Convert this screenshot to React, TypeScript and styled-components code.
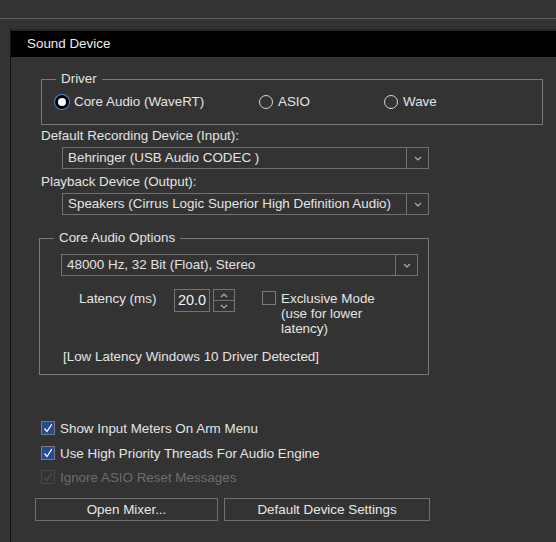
import * as React from 'react';
import styled, { createGlobalStyle } from 'styled-components';

const GlobalStyle = createGlobalStyle`
  html, body {
    margin: 0;
    padding: 0;
    background-color: #333333;
  }
  body {
    font-family: "Liberation Sans", Arial, Helvetica, sans-serif;
    font-size: 13.4px;
    color: #e4e4e4;
    overflow: hidden;
  }
`;

const Page = styled.div`
  width: 556px;
  height: 542px;
  overflow: hidden;
`;

const TopStrip = styled.div`
  height: 18px;
  border-bottom: 1px solid #5f5f5f;
  margin-bottom: 10px;
`;

const Panel = styled.div`
  margin-left: 10px;
  border-left: 1px solid #121212;
  border-top: 2px solid #262626;
  height: 600px;
`;

const PanelHeader = styled.div`
  height: 26px;
  line-height: 26px;
  background-color: #000;
  padding-left: 16px;
  color: #ececec;
`;

const PanelBody = styled.div`
  display: flex;
  flex-direction: column;
  align-items: flex-start;
`;

const Group = styled.fieldset<{ $left: number; $width: number; $top: number }>`
  margin: ${p => p.$top}px 0 0 ${p => p.$left}px;
  width: ${p => p.$width}px;
  box-sizing: border-box;
  border: 1px solid #7a7a7a;
  padding: 0;
  min-width: 0;
`;

const GroupTitle = styled.legend`
  margin-left: 14px;
  padding: 0 5px;
  line-height: 16px;
  color: #e4e4e4;
`;

const RadioRow = styled.div`
  display: grid;
  grid-template-columns: 204px 125px auto;
  padding: 7px 0 14px 13px;
`;

const RadioLabel = styled.label`
  display: flex;
  align-items: center;
  gap: 5px;
  line-height: 16px;
`;

const RadioDot = styled.span<{ $on?: boolean }>`
  width: 14px;
  height: 14px;
  box-sizing: border-box;
  border-radius: 50%;
  border: ${p => (p.$on ? '3px solid #000' : '1px solid #d6d6d6')};
  background-color: ${p => (p.$on ? '#ffffff' : 'transparent')};
  box-shadow: ${p => (p.$on ? '0 0 0 1px #4a8ad8' : 'none')};
`;

const FieldLabel = styled.div<{ $top: number; $left: number }>`
  margin: ${p => p.$top}px 0 0 ${p => p.$left}px;
  line-height: 16px;
`;

const Select = styled.div<{ $top: number; $left: number; $width: number }>`
  margin: ${p => p.$top}px 0 0 ${p => p.$left}px;
  width: ${p => p.$width}px;
  height: 22px;
  box-sizing: border-box;
  border: 1px solid #727272;
  display: flex;
  align-items: stretch;
`;

const SelectText = styled.div`
  flex: 1;
  padding-left: 5px;
  line-height: 20px;
  white-space: nowrap;
  overflow: hidden;
`;

const SelectArrow = styled.div`
  width: 21px;
  border-left: 1px solid #727272;
  display: flex;
  align-items: center;
  justify-content: center;
`;

const LatencyRow = styled.div`
  display: flex;
  align-items: flex-start;
  margin: 13px 0 0 39px;
`;

const LatencyLabel = styled.div`
  line-height: 16px;
  margin-top: 2px;
  width: 95px;
`;

const SpinText = styled.div`
  width: 36px;
  height: 23px;
  box-sizing: border-box;
  border: 1px solid #747474;
  line-height: 21px;
  font-size: 14.5px;
  text-align: center;
  color: #f0f0f0;
`;

const SpinButtons = styled.div`
  margin-left: 3px;
  width: 22px;
  height: 23px;
  box-sizing: border-box;
  border: 1px solid #747474;
  display: flex;
  flex-direction: column;
`;

const SpinHalf = styled.div<{ $top?: boolean }>`
  flex: 1;
  display: flex;
  align-items: center;
  justify-content: center;
  border-bottom: ${p => (p.$top ? '1px solid #747474' : 'none')};
`;

const ExclusiveOption = styled.div`
  display: flex;
  align-items: flex-start;
  margin-left: 27px;
  margin-top: 2px;
`;

const ExclusiveText = styled.div`
  margin-left: 5px;
  line-height: 15px;
`;

const Note = styled.div`
  margin: 13px 0 9px 23px;
  line-height: 16px;
`;

const CheckRow = styled.label<{ $top: number; $disabled?: boolean }>`
  display: flex;
  align-items: center;
  gap: 5px;
  margin: ${p => p.$top}px 0 0 30px;
  height: 18px;
  color: ${p => (p.$disabled ? '#6e6e6e' : '#e4e4e4')};
`;

const Box = styled.span<{ $checked?: boolean; $disabled?: boolean }>`
  width: 14px;
  height: 14px;
  box-sizing: border-box;
  border: 1px solid ${p => (p.$disabled ? '#474747' : '#7c7c7c')};
  background-color: ${p => (p.$checked && !p.$disabled ? '#234a94' : 'transparent')};
  display: flex;
  align-items: center;
  justify-content: center;
`;

const ButtonRow = styled.div`
  display: flex;
  gap: 6px;
  margin: 12px 0 0 24px;
`;

const Button = styled.button<{ $width: number }>`
  width: ${p => p.$width}px;
  height: 23px;
  box-sizing: border-box;
  border: 1px solid #707070;
  background-color: #333333;
  color: #e8e8e8;
  font-family: "Liberation Sans", Arial, sans-serif;
  font-size: 13.4px;
  padding: 0;
`;

const ChevronDown = () => (
  <svg width="8" height="5" viewBox="0 0 8 5">
    <path d="M1 1 L4 4 L7 1" stroke="#b0b0b0" strokeWidth="1.2" fill="none" />
  </svg>
);

const ChevronUp = () => (
  <svg width="8" height="5" viewBox="0 0 8 5">
    <path d="M1 4 L4 1 L7 4" stroke="#b0b0b0" strokeWidth="1.2" fill="none" />
  </svg>
);

const Tick = (props: { color: string }) => (
  <svg width="10" height="10" viewBox="0 0 10 10">
    <path d="M1.5 5.5 L4 8.5 L8.8 1.2" stroke={props.color} strokeWidth="1.2" fill="none" />
  </svg>
);

const Check = (props: { top: number; checked?: boolean; disabled?: boolean; children: React.ReactNode }) => (
  <CheckRow $top={props.top} $disabled={props.disabled}>
    <Box $checked={props.checked} $disabled={props.disabled}>
      {props.checked && <Tick color={props.disabled ? '#4e4e4e' : '#ffffff'} />}
    </Box>
    {props.children}
  </CheckRow>
);

export default function App() {
  return (
    <Page>
      <GlobalStyle />
      <TopStrip />
      <Panel>
        <PanelHeader>Sound Device</PanelHeader>
        <PanelBody>
          <Group $left={30} $width={502} $top={14}>
            <GroupTitle>Driver</GroupTitle>
            <RadioRow>
              <RadioLabel><RadioDot $on />Core Audio (WaveRT)</RadioLabel>
              <RadioLabel><RadioDot />ASIO</RadioLabel>
              <RadioLabel><RadioDot />Wave</RadioLabel>
            </RadioRow>
          </Group>

          <FieldLabel $top={3} $left={30}>Default Recording Device (Input):</FieldLabel>
          <Select $top={3} $left={51} $width={367}>
            <SelectText>Behringer (USB Audio CODEC )</SelectText>
            <SelectArrow><ChevronDown /></SelectArrow>
          </Select>

          <FieldLabel $top={5} $left={30}>Playback Device (Output):</FieldLabel>
          <Select $top={3} $left={51} $width={367}>
            <SelectText>Speakers (Cirrus Logic Superior High Definition Audio)</SelectText>
            <SelectArrow><ChevronDown /></SelectArrow>
          </Select>

          <Group $left={28} $width={390} $top={15}>
            <GroupTitle>Core Audio Options</GroupTitle>
            <Select $top={8} $left={21} $width={357}>
              <SelectText>48000 Hz, 32 Bit (Float), Stereo</SelectText>
              <SelectArrow><ChevronDown /></SelectArrow>
            </Select>
            <LatencyRow>
              <LatencyLabel>Latency (ms)</LatencyLabel>
              <SpinText>20.0</SpinText>
              <SpinButtons>
                <SpinHalf $top><ChevronUp /></SpinHalf>
                <SpinHalf><ChevronDown /></SpinHalf>
              </SpinButtons>
              <ExclusiveOption>
                <Box />
                <ExclusiveText>
                  Exclusive Mode<br />
                  (use for lower<br />
                  latency)
                </ExclusiveText>
              </ExclusiveOption>
            </LatencyRow>
            <Note>[Low Latency Windows 10 Driver Detected]</Note>
          </Group>

          <Check top={44} checked>Show Input Meters On Arm Menu</Check>
          <Check top={7} checked>Use High Priority Threads For Audio Engine</Check>
          <Check top={6} checked disabled>Ignore ASIO Reset Messages</Check>

          <ButtonRow>
            <Button $width={183}>Open Mixer...</Button>
            <Button $width={206}>Default Device Settings</Button>
          </ButtonRow>
        </PanelBody>
      </Panel>
    </Page>
  );
}
